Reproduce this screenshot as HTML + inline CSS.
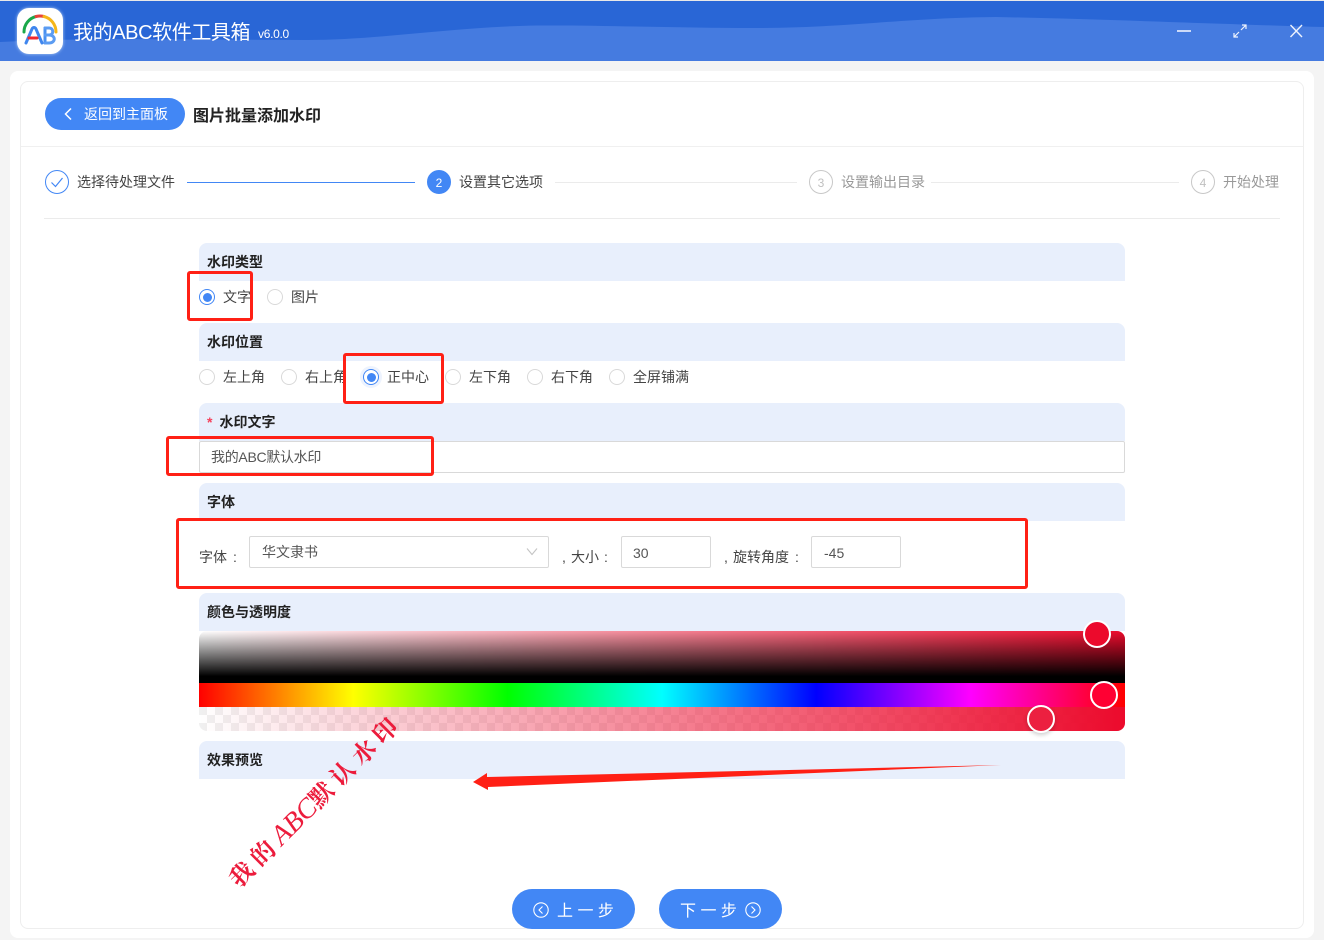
<!DOCTYPE html>
<html lang="zh"><head><meta charset="utf-8"><title>图片批量添加水印</title>
<style>
*{box-sizing:border-box}
html,body{margin:0;padding:0}
body{width:1324px;height:940px;overflow:hidden;position:relative;background:#f4f4f4;font-family:"Liberation Sans","Noto Sans CJK SC",sans-serif;font-size:14px;color:#333}
.a{position:absolute;white-space:nowrap}
.bar{position:absolute;left:199px;width:926px;height:38px;background:#e8effc;border-radius:8px 8px 0 0;font-weight:700;font-size:14px;line-height:39px;padding-left:8px;color:#222}
.r{position:absolute;width:16px;height:16px;border:1px solid #d9d9d9;border-radius:50%;background:#fff}
.r.on{border-color:#4287f5}
.r.on:after{content:"";position:absolute;left:2.500px;top:2.500px;width:9px;height:9px;border-radius:50%;background:#4287f5}
.t{position:absolute;font-size:14px;line-height:20px;color:#444;white-space:nowrap}
.box{position:absolute;border:1px solid #d9d9d9;border-radius:2px;background:#fff;font-size:14px;color:#555;white-space:nowrap}
.red{position:absolute;border:3px solid #ff2015;border-radius:3px}
.line{position:absolute;height:1px;background:#ebebeb}
.num{position:absolute;width:24px;height:24px;border-radius:50%;border:1px solid #c8c8c8;text-align:center;line-height:25px;font-size:12px;color:#c0c0c0;background:#fff}
.btn{position:absolute;top:889px;width:123px;height:40px;border-radius:20px;background:#4287f5;color:#fff;font-size:16px;line-height:45px;white-space:nowrap}
.knob{position:absolute;border:2px solid #fff;border-radius:50%}
</style></head><body>

<div class="a" style="left:0;top:0;width:1324px;height:61px;background:#457be0"></div>
<svg class="a" style="left:0;top:0" width="1324" height="61"><path d="M0 1H1324V27C1250 25 1100 19 996 17C900 18 850 28 755 28C680 28 600 25 537 25.500C450 27 380 40 307 40C200 40 100 37 0 42Z" fill="#2966d6"/></svg>
<div class="a" style="left:0;top:0;width:1324px;height:1px;background:#e8e8e8"></div>

<div class="a" style="left:17px;top:8px;width:46px;height:46px;border-radius:12px;background:#fff;box-shadow:0 0 3px #b5d0f5"></div>
<svg class="a" style="left:17px;top:8px" width="46" height="46" fill="none" stroke-linecap="round">
<path d="M7 24A16 16 0 0 1 19 8.500" stroke="#1aa84a" stroke-width="3"/>
<path d="M19 8.500A16 16 0 0 1 27 8.500" stroke="#e8433a" stroke-width="3"/>
<path d="M27 8.500A16 16 0 0 1 39 24" stroke="#f5b61a" stroke-width="3"/>
<path d="M9 35L15 21C16 19 18 19 19 21L25 35" stroke="#3f86ee" stroke-width="3"/>
<path d="M12 30H20" stroke="#f0282d" stroke-width="3"/>
<path d="M28 20V35" stroke="#4a90f0" stroke-width="3"/>
<path d="M28 20H32C37 20 37 27 32 27H28M32 27C39 27 39 35 32 35H28" stroke="#5b9cf2" stroke-width="3"/>
</svg>
<div class="a" style="left:73px;top:18px;font-size:20px;line-height:30px;color:#fff;letter-spacing:-.4px">我的ABC软件工具箱</div>
<div class="a" style="left:258px;top:25px;font-size:12px;line-height:18px;color:#fff;letter-spacing:-.3px">v6.0.0</div>
<svg class="a" style="left:1170px;top:20px" width="140" height="22" fill="none" stroke="#eef3fd">
<path d="M7 11H21" stroke-width="1.600"/>
<path d="M71 10L76 5M72 5H76V9M69 12L64 17M64 13V17H68" stroke-width="1.200"/>
<path d="M120.500 5L132 17M132 5L120.500 17" stroke-width="1.400"/>
</svg>

<div class="a" style="left:10px;top:71px;width:1304px;height:867px;background:#fff;border-radius:8px"></div>
<div class="a" style="left:20px;top:81px;width:1284px;height:848px;background:#fff;border:1px solid #eee;border-radius:8px"></div>
<div class="line" style="left:21px;top:146px;width:1282px;background:#f0f0f0"></div>

<div class="a" style="left:45px;top:98px;width:140px;height:32px;border-radius:16px;background:#4287f5"></div>
<svg class="a" style="left:60px;top:106px" width="16" height="16" fill="none" stroke="#fff" stroke-width="1.500"><path d="M11 2.500L5.500 8L11 13.500"/></svg>
<div class="a" style="left:84px;top:104px;font-size:14px;line-height:20px;color:#fff">返回到主面板</div>
<div class="a" style="left:193px;top:105px;font-size:16px;line-height:24px;font-weight:700;color:#222">图片批量添加水印</div>

<div class="num" style="left:45px;top:170px;border-color:#4287f5"></div>
<svg class="a" style="left:45px;top:170px" width="24" height="24" fill="none" stroke="#4287f5" stroke-width="1.200"><path d="M6.500 12.500L10.500 16.500L17.500 8"/></svg>
<div class="t" style="left:77px;top:172px">选择待处理文件</div>
<div class="line" style="left:187px;top:182px;width:228px;background:#4287f5"></div>
<div class="num" style="left:427px;top:170px;background:#4287f5;border-color:#4287f5;color:#fff">2</div>
<div class="t" style="left:459px;top:172px">设置其它选项</div>
<div class="line" style="left:555px;top:182px;width:242px"></div>
<div class="num" style="left:809px;top:170px">3</div>
<div class="t" style="left:841px;top:172px;color:#999">设置输出目录</div>
<div class="line" style="left:931px;top:182px;width:248px"></div>
<div class="num" style="left:1191px;top:170px">4</div>
<div class="t" style="left:1223px;top:172px;color:#999">开始处理</div>
<div class="line" style="left:44px;top:218px;width:1236px"></div>

<div class="bar" style="top:243px">水印类型</div>
<div class="r on" style="left:199px;top:289px"></div><div class="t" style="left:223px;top:287px">文字</div>
<div class="r" style="left:267px;top:289px"></div><div class="t" style="left:291px;top:287px">图片</div>

<div class="bar" style="top:323px">水印位置</div>
<div class="r" style="left:199px;top:369px"></div><div class="t" style="left:223px;top:367px">左上角</div>
<div class="r" style="left:281px;top:369px"></div><div class="t" style="left:305px;top:367px">右上角</div>
<div class="a" style="left:360px;top:366px;width:22px;height:22px;border-radius:50%;background:#edf3fe"></div>
<div class="r on" style="left:363px;top:369px"></div><div class="t" style="left:387px;top:367px">正中心</div>
<div class="r" style="left:445px;top:369px"></div><div class="t" style="left:469px;top:367px">左下角</div>
<div class="r" style="left:527px;top:369px"></div><div class="t" style="left:551px;top:367px">右下角</div>
<div class="r" style="left:609px;top:369px"></div><div class="t" style="left:633px;top:367px">全屏铺满</div>

<div class="bar" style="top:403px"><span style="color:#f5405a;margin-right:7px">*</span>水印文字</div>
<div class="box" style="left:199px;top:441px;width:926px;height:32px;line-height:30px;padding-left:11px;letter-spacing:-.3px">我的ABC默认水印</div>

<div class="bar" style="top:483px">字体</div>
<div class="t" style="left:199px;top:547px">字体</div>
<div class="t" style="left:233px;top:547px">:</div>
<div class="box" style="left:249px;top:536px;width:300px;height:32px;line-height:31px;padding-left:12px">华文隶书</div>
<svg class="a" style="left:524px;top:546px" width="16" height="12" fill="none" stroke="#c4c4c4" stroke-width="1.100"><path d="M3 2.500L8 8.500L13 2.500"/></svg>
<div class="t" style="left:562px;top:547px">,</div>
<div class="t" style="left:571px;top:547px">大小</div>
<div class="t" style="left:604px;top:547px">:</div>
<div class="box" style="left:621px;top:536px;width:90px;height:32px;line-height:32px;padding-left:11px">30</div>
<div class="t" style="left:724px;top:547px">,</div>
<div class="t" style="left:733px;top:547px">旋转角度</div>
<div class="t" style="left:795px;top:547px">:</div>
<div class="box" style="left:811px;top:536px;width:90px;height:32px;line-height:32px;padding-left:12px">-45</div>

<div class="bar" style="top:593px">颜色与透明度</div>
<div class="a" style="left:199px;top:631px;width:926px;height:100px;border-radius:8px;overflow:hidden;background:#fff">
 <div class="a" style="left:0;top:0;width:926px;height:52px;background:linear-gradient(to bottom,rgba(0,0,0,0),#000 87%),linear-gradient(to right,#fff,#ec0a2c)"></div>
 <div class="a" style="left:0;top:52px;width:926px;height:24px;background:linear-gradient(to right,#f00 0%,#ff0 16.670%,#0f0 33.330%,#0ff 50%,#00f 66.670%,#f0f 83.330%,#f00 100%)"></div>
 <div class="a" style="left:0;top:76px;width:926px;height:24px;background:conic-gradient(rgba(0,0,0,.06) 25%,transparent 0 50%,rgba(0,0,0,.06) 0 75%,transparent 0) 8px 0/16px 16px"></div>
 <div class="a" style="left:0;top:76px;width:926px;height:24px;background:linear-gradient(to right,rgba(236,10,44,0),#ec0a2c)"></div>
</div>
<div class="knob" style="left:1083px;top:620px;width:28px;height:28px;background:#ec0a2c"></div>
<div class="knob" style="left:1090px;top:681px;width:28px;height:28px;background:#ff0033"></div>
<div class="knob" style="left:1027px;top:705px;width:28px;height:28px;background:#ec2040;box-shadow:0 2px 4px rgba(0,0,0,.2)"></div>

<div class="bar" style="top:741px">效果预览</div>

<div class="a" style="left:234px;top:868px;transform-origin:0 50%;transform:rotate(-45deg);font-family:'Liberation Serif','Noto Serif CJK SC',serif;font-weight:700;font-size:24px;line-height:30px;color:#ec1c3c;letter-spacing:6px">我的<span style="font-style:italic;font-weight:400;font-size:28px;letter-spacing:0;line-height:30px">ABC</span>默认水印</div>

<svg class="a" style="left:470px;top:760px" width="540" height="32"><path d="M3 22L17 13L17 17L531 5L18 27L18 30Z" fill="#ff2015"/></svg>

<div class="red" style="left:187px;top:271px;width:66px;height:50px"></div>
<div class="red" style="left:343px;top:353px;width:101px;height:51px"></div>
<div class="red" style="left:166px;top:436px;width:268px;height:40px"></div>
<div class="red" style="left:176px;top:518px;width:852px;height:71px"></div>

<div class="btn" style="left:512px;padding-left:45px">上 一 步</div>
<svg class="a" style="left:532px;top:901px" width="18" height="18" fill="none" stroke="#fff" stroke-width="1.100"><circle cx="9" cy="9" r="7.200"/><path d="M10.500 5.500L7 9L10.500 12.500"/></svg>
<div class="btn" style="left:659px;padding-left:21px">下 一 步</div>
<svg class="a" style="left:744px;top:901px" width="18" height="18" fill="none" stroke="#fff" stroke-width="1.100"><circle cx="9" cy="9" r="7.200"/><path d="M7.500 5.500L11 9L7.500 12.500"/></svg>
</body></html>
